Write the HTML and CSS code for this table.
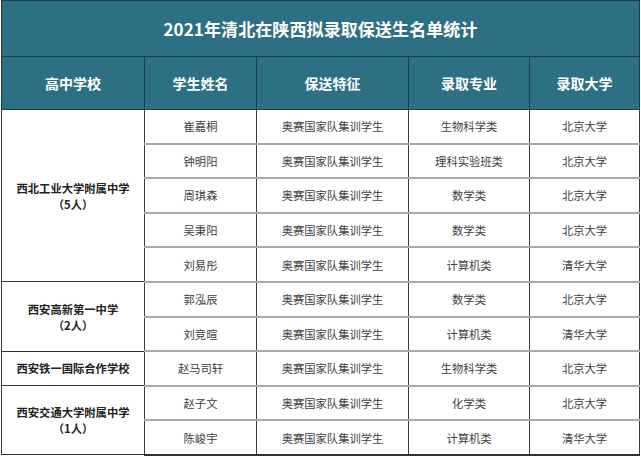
FILE: index.html
```html
<!DOCTYPE html>
<html lang="zh-CN">
<head>
<meta charset="utf-8">
<title>2021年清北在陕西拟录取保送生名单统计</title>
<link rel="stylesheet" href="styles.css">
</head>
<body>
<table class="sheet">
  <colgroup>
    <col class="c1"><col class="c2"><col class="c3"><col class="c4"><col class="c5">
  </colgroup>
  <thead>
    <tr class="title-row"><th colspan="5" class="title">2021年清北在陕西拟录取保送生名单统计</th></tr>
    <tr class="head-row">
      <th>高中学校</th><th>学生姓名</th><th>保送特征</th><th>录取专业</th><th>录取大学</th>
    </tr>
  </thead>
  <tbody>
    <tr class="grp-start">
      <td rowspan="5" class="school">西北工业大学附属中学<br>（5人）</td>
      <td>崔嘉桐</td><td>奥赛国家队集训学生</td><td>生物科学类</td><td>北京大学</td>
    </tr>
    <tr><td>钟明阳</td><td>奥赛国家队集训学生</td><td>理科实验班类</td><td>北京大学</td></tr>
    <tr><td>周琪森</td><td>奥赛国家队集训学生</td><td>数学类</td><td>北京大学</td></tr>
    <tr><td>吴秉阳</td><td>奥赛国家队集训学生</td><td>数学类</td><td>北京大学</td></tr>
    <tr><td>刘易彤</td><td>奥赛国家队集训学生</td><td>计算机类</td><td>清华大学</td></tr>
    <tr class="grp-start">
      <td rowspan="2" class="school">西安高新第一中学<br>（2人）</td>
      <td>郭泓辰</td><td>奥赛国家队集训学生</td><td>数学类</td><td>北京大学</td>
    </tr>
    <tr><td>刘竞暄</td><td>奥赛国家队集训学生</td><td>计算机类</td><td>清华大学</td></tr>
    <tr class="grp-start">
      <td class="school">西安铁一国际合作学校</td>
      <td>赵马司轩</td><td>奥赛国家队集训学生</td><td>生物科学类</td><td>北京大学</td>
    </tr>
    <tr class="grp-start">
      <td rowspan="2" class="school">西安交通大学附属中学<br>（1人）</td>
      <td>赵子文</td><td>奥赛国家队集训学生</td><td>化学类</td><td>北京大学</td>
    </tr>
    <tr><td>陈峻宇</td><td>奥赛国家队集训学生</td><td>计算机类</td><td>清华大学</td></tr>
  </tbody>
</table>
</body>
</html>
```

FILE: styles.css
```css
html, body {
  margin: 0;
  padding: 0;
  background: #ffffff;
}

body {
  font-family: "Noto Sans CJK SC", "Noto Sans", sans-serif;
}

.sheet {
  margin-left: 1px;
  width: 638px;
  border-collapse: collapse;
  table-layout: fixed;
}

.c1 { width: 143px; }
.c2 { width: 112px; }
.c3 { width: 152px; }
.c4 { width: 121px; }
.c5 { width: 110px; }

.sheet th {
  background: #2e7083;
  color: #ffffff;
  font-weight: 700;
  border: 1px solid #1d3d4a;
  padding: 0;
  text-align: center;
}

.title-row { height: 56px; }
.title {
  font-size: 17px;
  letter-spacing: 0.1px;
  padding-top: 2px;
}

.head-row { height: 53px; }
.head-row th {
  font-size: 14px;
}

.sheet td {
  height: 32.6px;
  padding: 0;
  text-align: center;
  font-size: 11.3px;
  color: #404040;
  border-left: 1px solid #3c3c3c;
  border-right: 1px solid #3c3c3c;
  border-top: 2px solid #a9a9a9;
  border-bottom: 2px solid #a9a9a9;
  line-height: 16px;
}

.sheet tr.grp-start td {
  border-top: 1px solid #333333;
}

.sheet td.school {
  font-weight: 700;
  color: #222222;
  border-bottom: 1px solid #333333;
}

.sheet tbody tr:last-child td {
  border-bottom: 2px solid #333333;
}
```
